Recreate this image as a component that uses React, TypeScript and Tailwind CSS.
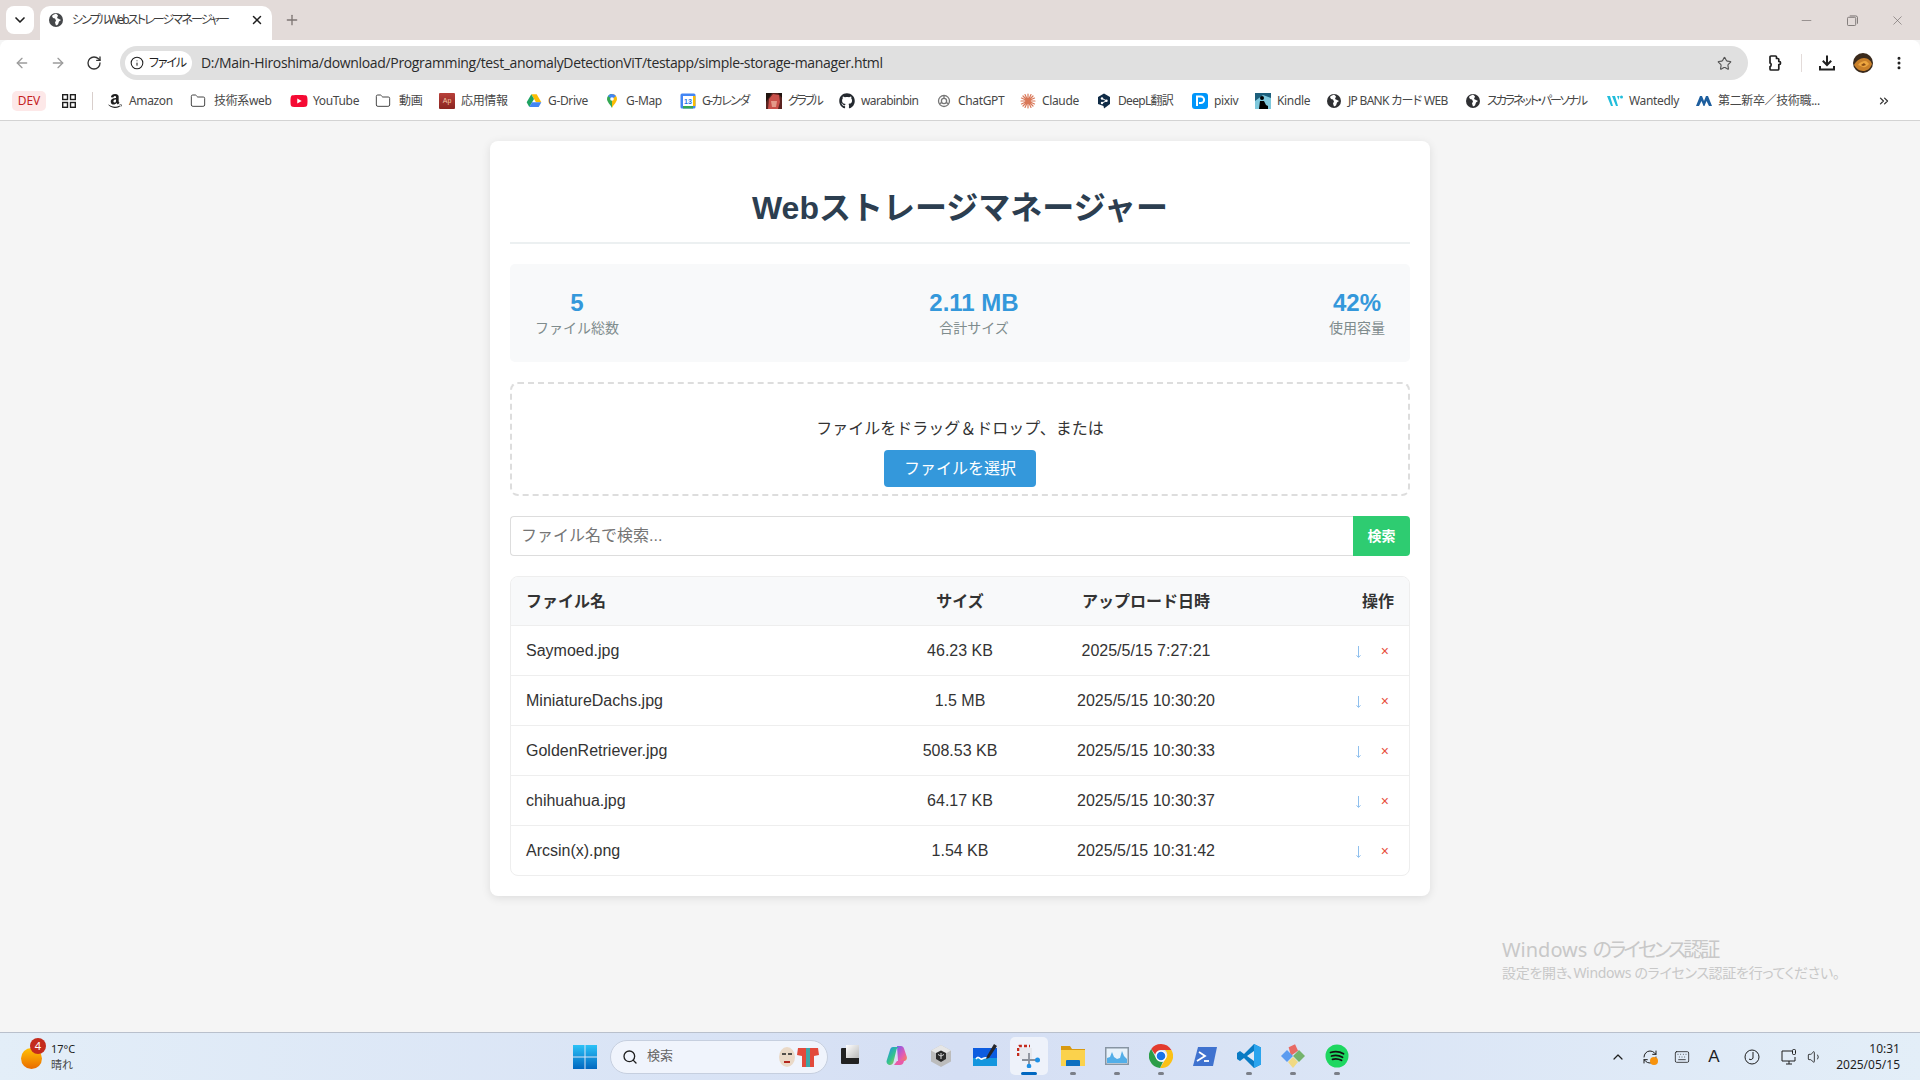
import React from "react";
import { ArrowLeft, ArrowRight, RotateCw, RefreshCw, Info, Star, MoreVertical, ChevronDown, ChevronUp, Plus, X, Minus, Folder, Search, ChevronsRight, Keyboard, Volume1 } from "lucide-react";
import { FaAmazon, FaGithub, FaYoutube } from "react-icons/fa";

const ui = "font-['Noto_Sans','Noto_Sans_CJK_JP',sans-serif] [font-feature-settings:'palt']";

const Drive = () => (
  <svg viewBox="0 0 24 24" className="w-4 h-4">
    <path d="M8 2h8l7 12h-8z" fill="#fbbc04" />
    <path d="M8 2 1 14l4 7 7-12z" fill="#1ea362" />
    <path d="M9 14h14l-4 7H5z" fill="#4285f4" />
  </svg>
);
const MapPin = () => (
  <svg viewBox="0 0 16 16" className="w-4 h-4">
    <path d="M8 1a5 5 0 0 0-5 5c0 3 3 5 5 9z" fill="#34a853" />
    <path d="M8 1a5 5 0 0 1 5 5c0 3-3 5-5 9z" fill="#fbbc04" />
    <path d="M4 3a5 5 0 0 1 8 0L8 6z" fill="#4285f4" />
    <circle cx="8" cy="6" r="1.8" fill="#fff" />
  </svg>
);
const Cal = () => (
  <svg viewBox="0 0 16 16" className="w-4 h-4">
    <rect x="0.5" y="0.5" width="15" height="15" rx="1.5" fill="#4285f4" />
    <rect x="3" y="3" width="10" height="10" fill="#fff" />
    <path d="M3 13h10v2.5H3z" fill="#34a853" />
    <path d="M13 3h2.5v10H13z" fill="#fbbc04" />
    <text x="8" y="11" fontSize="7" textAnchor="middle" fill="#1a73e8" fontFamily="Liberation Sans" fontWeight="700">13</text>
  </svg>
);
const Gbf = () => (
  <svg viewBox="0 0 16 16" className="w-4 h-4">
    <rect width="16" height="16" fill="#5a2320" />
    <path d="M2 16 3 6l4-5 6 1 1 7-2 7z" fill="#c9504a" />
    <path d="M5 8h6l-1 6H6z" fill="#e49a8a" />
    <path d="M0 0h6L2 6 0 9zM16 0h-4l4 5z" fill="#20140f" />
  </svg>
);
const Gpt = () => (
  <svg viewBox="0 0 16 16" className="w-4 h-4" fill="none" stroke="#777" strokeWidth="1.3">
    <circle cx="8" cy="8" r="5.5" />
    <circle cx="8" cy="8" r="2.6" />
    <path d="M8 2.5v3M3.4 11l2.4-1.6M12.6 11l-2.4-1.6" />
  </svg>
);
const Claude = () => (
  <svg viewBox="0 0 16 16" className="w-4 h-4" stroke="#d97757" strokeWidth="1.2" strokeLinecap="round">
    <path d="M8 1v14M1 8h14M3 3l10 10M13 3 3 13M5 1.500l6 13M11 1.500l-6 13M1.500 5l13 6M1.500 11l13-6" />
  </svg>
);
const DeepL = () => (
  <svg viewBox="0 0 16 16" className="w-4 h-4">
    <path d="M8 0.500 14 4v7l-6 4.500-0.500-2.500L2 11V4z" fill="#0f2b46" />
    <circle cx="6" cy="5.500" r="1.200" fill="#fff" />
    <circle cx="6" cy="10" r="1.200" fill="#fff" />
    <circle cx="10.500" cy="7.800" r="1.200" fill="#fff" />
    <path d="M6 5.500l4.500 2.300L6 10" stroke="#fff" fill="none" />
  </svg>
);
const Pixiv = () => (
  <svg viewBox="0 0 16 16" className="w-4 h-4">
    <rect width="16" height="16" rx="3" fill="#0096fa" />
    <path d="M5 13V3.500h3.800a3.300 3.300 0 0 1 0 6.600H7" fill="none" stroke="#fff" strokeWidth="2" />
  </svg>
);
const Kindle = () => (
  <svg viewBox="0 0 16 16" className="w-4 h-4">
    <rect width="16" height="16" fill="#7fc8dc" />
    <path d="M0 0h16v5L8 2 0 8z" fill="#1d5f7c" />
    <circle cx="7" cy="5" r="2" fill="#000" />
    <path d="M4 16 5 8h4l2 4 2 1v3z" fill="#000" />
  </svg>
);
const Wantedly = () => (
  <svg viewBox="0 0 16 16" className="w-4 h-4" fill="#21bddb">
    <path d="M0 3h3l3 10H4zM5 3h3l3 10H9z" />
    <path d="M10 3h2.500l-1 4z" />
    <circle cx="14.500" cy="4" r="1.500" />
  </svg>
);
const Mynavi = () => (
  <svg viewBox="0 0 16 16" className="w-4 h-4" fill="#1d5e9e">
    <path d="M0 13 4 3h2l2 5 2-5h2l4 10h-3L10.500 8 8.500 13h-1L5.500 8 3 13z" />
  </svg>
);
const Ap = () => (
  <div className="w-4 h-4 bg-gradient-to-b from-[#b8403a] to-[#8a2420] rounded-[1px] flex items-center justify-center text-[7px] leading-none text-[#f3c9a8] font-['Liberation_Sans']">Ap</div>
);
const Apps = () => (
  <svg viewBox="0 0 14 14" className="w-[14px] h-[14px]" fill="none" stroke="#1f1f1f" strokeWidth="1.400">
    <rect x="0.700" y="0.700" width="4.800" height="4.800" />
    <rect x="8.500" y="0.700" width="4.800" height="4.800" />
    <rect x="0.700" y="8.500" width="4.800" height="4.800" />
    <rect x="8.500" y="8.500" width="4.800" height="4.800" />
  </svg>
);
const GlobeSolid = ({ fill = "#2f3033" }: { fill?: string }) => (
  <svg viewBox="0 0 16 16" className="w-4 h-4">
    <circle cx="8" cy="8" r="7" fill={fill} />
    <path d="M8 1.500c-1 1-3 1-4 2.500l1 2 2 .5 1 2-1 2 1 3 2-1 1-3 2-1.500-2-1-2-1 1-2.500z" fill="#fff" />
  </svg>
);

const bookmarks: [React.ReactNode, string, string][] = [
  [<FaAmazon className="w-4 h-4 text-[#1f1f1f]" />, "Amazon", "w-[44px]"],
  [<Folder className="w-4 h-4 text-[#474747]" strokeWidth={1.5} />, "技術系web", "w-[62px] pl-[2px]"],
  [<FaYoutube className="w-[18px] h-[18px] -mx-px text-[#f50a33]" />, "YouTube", "w-[45px]"],
  [<Folder className="w-4 h-4 text-[#474747]" strokeWidth={1.5} />, "動画", "w-[25px] pl-[2px]"],
  [<Ap />, "応用情報", "w-[48px]"],
  [<Drive />, "G-Drive", "w-[39px]"],
  [<MapPin />, "G-Map", "w-[37px]"],
  [<Cal />, "G-カレンダ", "w-[47px] tracking-[-1.500px]"],
  [<Gbf />, "グラブル", "w-[34px] tracking-[-2.400px]"],
  [<FaGithub className="w-4 h-4 text-[#24292f]" />, "warabinbin", "w-[58px] tracking-[-0.600px]"],
  [<Gpt />, "ChatGPT", "w-[45px]"],
  [<Claude />, "Claude", "w-[37px]"],
  [<DeepL />, "DeepL翻訳", "w-[57px] tracking-[-0.700px]"],
  [<Pixiv />, "pixiv", "w-[24px]"],
  [<Kindle />, "Kindle", "w-[32px]"],
  [<GlobeSolid />, "JP BANK カード WEB", "w-[100px] tracking-[-0.700px]"],
  [<GlobeSolid />, "スカラネット・パーソナル", "w-[103px] tracking-[-2.100px]"],
  [<Wantedly />, "Wantedly", "w-[50px]"],
  [<Mynavi />, "第二新卒／技術職...", "w-[104px]"],
];

const files = [
  ["Saymoed.jpg", "46.23 KB", "2025/5/15 7:27:21"],
  ["MiniatureDachs.jpg", "1.5 MB", "2025/5/15 10:30:20"],
  ["GoldenRetriever.jpg", "508.53 KB", "2025/5/15 10:30:33"],
  ["chihuahua.jpg", "64.17 KB", "2025/5/15 10:30:37"],
  ["Arcsin(x).png", "1.54 KB", "2025/5/15 10:31:42"],
];

const cols = "grid grid-cols-[364px_140px_232px_132px] items-center px-[15px]";

function Chrome() {
  return (
    <div className={ui}>
      {/* tab strip */}
      <div className="h-10 bg-[#e3dbd9] flex items-end pl-[6px] relative">
        <div className="w-7 h-7 mb-[6px] rounded-[8px] bg-white flex items-center justify-center">
          <ChevronDown className="w-4 h-4 text-[#1f1f1f]" strokeWidth={2.500} />
        </div>
        <div className="ml-[6px] w-[232px] h-[34px] bg-white rounded-t-[10px] flex items-center pl-[8px] pr-[10px] pb-[6px]">
          <GlobeSolid fill="#45474a" />
          <span className="ml-2 text-[12px] text-[#3c3c3c] whitespace-nowrap w-[156px] tracking-[-1.850px]">シンプルWebストレージマネージャー</span>
          <X className="ml-auto -mr-[2px] w-[14px] h-[14px] text-[#1f1f1f]" strokeWidth={2.500} />
        </div>
        <Plus className="ml-[12px] mb-[12px] w-4 h-4 text-[#7d7573]" strokeWidth={2} />
        <div className="ml-auto flex items-center h-10 pr-[15px] text-[#6b6665]">
          <Minus className="w-[15px] h-[15px] mr-[33px]" strokeWidth={1} />
          <svg viewBox="0 0 12 12" className="w-[11px] h-[11px] mr-[32px]" fill="none" stroke="currentColor" strokeWidth="0.900">
            <rect x="0.500" y="2.500" width="9" height="9" rx="1.200" />
            <path d="M3 1h6.500A2 2 0 0 1 11.500 3v6.500" />
          </svg>
          <X className="w-[15px] h-[15px]" strokeWidth={1} />
        </div>
      </div>
      {/* toolbar */}
      <div className="h-[41px] bg-white rounded-t-[8px] flex items-start pt-[6px]">
        <div className="w-[120px] h-[34px] flex items-center pl-[14px] gap-5 shrink-0">
          <ArrowLeft className="w-4 h-4 text-[#9c9c9c]" strokeWidth={2} />
          <ArrowRight className="w-4 h-4 text-[#9c9c9c]" strokeWidth={2} />
          <RotateCw className="w-4 h-4 text-[#333]" strokeWidth={2} />
        </div>
        <div className="w-[1628px] h-[34px] bg-[#e0e0e0] rounded-full flex items-center pl-[5px] pr-[16px] shrink-0">
          <div className="h-6 w-[67px] bg-white rounded-full flex items-center pl-[5px] gap-[5px]">
            <Info className="w-[14px] h-[14px] text-[#1f1f1f]" strokeWidth={1.800} />
            <span className="text-[12px] text-[#1f1f1f] whitespace-nowrap tracking-[-1.200px] -mt-px">ファイル</span>
          </div>
          <span className="ml-[9px] -mt-px w-[682px] text-[14px] text-[#2b2b2b] whitespace-nowrap font-['Open_Sans',sans-serif] tracking-[-0.340px]">D:/Main-Hiroshima/download/Programming/test_anomalyDetectionViT/testapp/simple-storage-manager.html</span>
          <Star className="ml-auto w-[15px] h-[15px] text-[#555]" strokeWidth={1.800} />
        </div>
        <div className="flex-1 h-[34px] flex items-center text-[#1f1f1f]">
          <svg viewBox="0 0 16 16" className="ml-[19px] w-4 h-4" fill="none" stroke="currentColor" strokeWidth="1.700" strokeLinejoin="round">
            <path d="M4 1h4.500a1 1 0 0 1 1 1v1.500h1.300a1 1 0 0 1 1 1V6.500h.7c1.400 0 1.400 3 0 3h-.7V14a1 1 0 0 1-1 1H4a1 1 0 0 1-1-1v-2.500c1.500 0 1.500-3.500 0-3.500V2a1 1 0 0 1 1-1z" />
          </svg>
          <div className="ml-[18px] w-px h-[18px] bg-[#e3dbd9]" />
          <svg viewBox="0 0 16 16" className="ml-[17px] w-4 h-4" fill="none" stroke="currentColor" strokeWidth="2">
            <path d="M8 0.500v9M3.800 5.800 8 10l4.200-4.200M1 11v3.500h14V11" />
          </svg>
          <svg viewBox="0 0 20 20" className="ml-[18px] w-5 h-5">
            <circle cx="10" cy="10" r="10" fill="#3a2a1c" />
            <path d="M1 12c2-4 6-7 10-7s7 3 8 6c-2 5-5 7-9 7s-7-3-9-6z" fill="#c9802a" />
            <path d="M5 12c2-3 5-4 7-4s3 2 4 3c-2 2-4 4-6 3s-3-1-5-2z" fill="#eda63f" />
            <path d="M8 12l3-2 2 2-3 1z" fill="#8a4d14" />
          </svg>
          <MoreVertical className="ml-[18px] w-4 h-4" strokeWidth={2.500} />
        </div>
      </div>
      {/* bookmarks */}
      <div className="h-10 bg-white border-b border-[#d3d3d3] flex items-center pl-3">
        <div className="w-[34px] h-5 rounded-[5px] bg-[#fde8e8] flex items-center justify-center text-[12px] text-[#c5221f] shrink-0">DEV</div>
        <div className="ml-4 shrink-0"><Apps /></div>
        <div className="ml-4 w-px h-[18px] bg-[#d9cfcc] shrink-0" />
        <div className="ml-[14px] flex items-center gap-[17px]">
          {bookmarks.map(([icon, label, w]) => (
            <div key={label} className="flex items-center gap-[6px] shrink-0">
              <div className="w-4 h-4 flex items-center justify-center shrink-0">{icon}</div>
              <span className={`text-[12px] leading-4 text-[#474747] whitespace-nowrap tracking-[-0.350px] ${w}`}>{label}</span>
            </div>
          ))}
        </div>
        <ChevronsRight className="ml-auto mr-[29px] w-[14px] h-[14px] text-[#333]" strokeWidth={2.200} />
      </div>
    </div>
  );
}

function Card() {
  return (
    <div className="w-[940px] mx-auto mt-5 bg-white rounded-lg shadow-[0_2px_10px_rgba(0,0,0,0.1)] p-5 text-[#333] font-['Liberation_Sans','Noto_Sans_CJK_JP',sans-serif]">
      <h1 className="pt-[27px] pb-[14px] text-[32px] leading-10 font-bold text-[#2c3e50] text-center border-b-2 border-[#ecf0f1] mb-5">Webストレージマネージャー</h1>
      <div className="bg-[#f8f9fa] rounded-[5px] flex justify-between px-[25px] py-6 mb-5 text-center">
        {[["5", "ファイル総数"], ["2.11 MB", "合計サイズ"], ["42%", "使用容量"]].map(([v, l]) => (
          <div key={l}>
            <div className="text-[24px] leading-[30px] font-bold text-[#3498db]">{v}</div>
            <div className="text-[14px] leading-5 text-[#7f8c8d]">{l}</div>
          </div>
        ))}
      </div>
      <div className="h-[114px] border-2 border-dashed border-[#ddd] rounded-lg mb-5 flex flex-col items-center pt-[32px]">
        <p className="text-[16px] leading-[26px]">ファイルをドラッグ＆ドロップ、または</p>
        <button className="mt-[8px] w-[152px] h-[37px] bg-[#3498db] text-white rounded text-[16px]">ファイルを選択</button>
      </div>
      <div className="flex h-10 mb-5">
        <input readOnly placeholder="ファイル名で検索..." className="flex-1 border border-[#ddd] border-r-0 rounded-l px-[10px] text-[16px] placeholder:text-[#757575] outline-none" />
        <button className="w-[57px] bg-[#2ecc71] text-white text-[14px] font-bold rounded-r">検索</button>
      </div>
      <div className="border border-[#eee] rounded-lg overflow-hidden">
        <div className={`${cols} h-[49px] pt-[2px] bg-[#f8f9fa] font-bold text-[16px] border-b border-[#eee]`}>
          <div>ファイル名</div>
          <div className="text-center">サイズ</div>
          <div className="text-center">アップロード日時</div>
          <div className="text-right">操作</div>
        </div>
        {files.map(([n, s, d], i) => (
          <div key={n} className={`${cols} ${i < 4 ? "h-[50px] border-b border-[#eee]" : "h-[49px]"} text-[16px]`}>
            <div>{n}</div>
            <div className="text-center">{s}</div>
            <div className="text-center">{d}</div>
            <div className="flex justify-end items-center">
              <svg viewBox="0 0 7 12" className="w-[7px] h-3 mt-[2px] mr-[19px]" fill="none" stroke="#8fc0ee" strokeWidth="1">
                <path d="M3.500 0v11M1.500 9.300 3.500 11.500 5.500 9.300" />
              </svg>
              <span className="text-[14px] leading-none text-[#e74c3c] mr-[5px]">×</span>
            </div>
          </div>
        ))}
      </div>
    </div>
  );
}

const Dot = () => <div className="w-[6px] h-[3px] rounded-full bg-[#7b7f88]" />;

function Tile({ children, dot, active }: { children: React.ReactNode; dot?: boolean; active?: boolean }) {
  return (
    <div className="relative w-[44px] h-[47px] flex items-center justify-center pb-px">
      {active && <div className="absolute left-[3px] top-[4px] w-[38px] h-[38px] rounded-[5px] bg-[#eef2fa]" />}
      <div className="relative">{children}</div>
      {dot && <div className="absolute left-[19px] top-[39px]"><Dot /></div>}
      {active && <div className="absolute left-[14px] top-[39px] w-4 h-[3px] rounded-full bg-[#0067c0]" />}
    </div>
  );
}

function Taskbar() {
  return (
    <div className={`${ui} h-12 border-t border-[#b9c0cc] bg-gradient-to-r from-[#e3eef8] via-[#d5dff4] to-[#e3eef8] flex items-center shrink-0`}>
      <div className="w-[573px] h-full relative flex items-center shrink-0">
        <div className="ml-[21px] w-[21px] h-[21px] mt-[3px] rounded-full bg-gradient-to-b from-[#ffc107] to-[#e86a00]" />
        <div className="absolute left-[30px] top-[5px] w-4 h-4 rounded-full bg-[#c42b1c] text-white text-[11px] leading-4 text-center">4</div>
        <div className="ml-[9px] text-[11px] leading-4 text-[#1f1f1f]">
          <div>17°C</div>
          <div className="text-[#444]">晴れ</div>
        </div>
      </div>
      <svg viewBox="0 0 24 24" className="w-6 h-6 shrink-0">
        <defs>
          <linearGradient id="w" x1="0" y1="0" x2="0" y2="1">
            <stop offset="0" stopColor="#2cc2f7" />
            <stop offset="1" stopColor="#0067c0" />
          </linearGradient>
          <linearGradient id="cp1" x1="0" y1="0" x2="1" y2="1">
            <stop offset="0" stopColor="#1c8cf0" />
            <stop offset="0.500" stopColor="#35c48a" />
            <stop offset="1" stopColor="#f6c33b" />
          </linearGradient>
          <linearGradient id="cp2" x1="0" y1="0" x2="1" y2="1">
            <stop offset="0" stopColor="#7a5cf0" />
            <stop offset="0.600" stopColor="#e55bb0" />
            <stop offset="1" stopColor="#f78a4c" />
          </linearGradient>
        </defs>
        <path d="M0 0h11.500v11.500H0zM12.500 0H24v11.500H12.500zM0 12.500h11.500V24H0zM12.500 12.500H24V24H12.500z" fill="url(#w)" />
      </svg>
      <div className="ml-[13px] w-[218px] h-[34px] rounded-full bg-[#f0f4fc] border border-[#c6cfdf] flex items-center pl-[11px] shrink-0">
        <Search className="w-4 h-4 text-[#1f1f1f]" strokeWidth={2} />
        <span className="ml-[9px] text-[13px] text-[#666] -mt-px">検索</span>
        <svg viewBox="0 0 42 24" className="ml-auto mr-[7px] w-[42px] h-6">
          <ellipse cx="9" cy="12" rx="8" ry="10" fill="#ead9c7" />
          <path d="M4 9h4M10 9h4" stroke="#222" strokeWidth="1.500" />
          <path d="M6 16h6v2H6z" fill="#b3261e" />
          <path d="M20 3h20l1 7-5 1v11h-12V11l-5-1z" fill="#e24a3b" />
          <path d="M28 3h4v19h-4z" fill="#3fa6a6" />
        </svg>
      </div>
      <div className="mr-[3px]">
        <Tile>
          <div className="w-[18px] h-4 bg-[#222] rounded-[1px] relative">
            <div className="absolute -top-[3px] right-0 w-[13px] h-[13px] bg-gradient-to-br from-white to-[#bbb]" />
          </div>
        </Tile>
      </div>
      <Tile>
        <svg viewBox="0 0 24 24" className="w-6 h-6">
          <path d="M12 2h4c1.500 0 2.500 1 3 2.500l2.700 8c.8 2.500-.7 4.500-3 4.500H13z" fill="url(#cp2)" />
          <path d="M8 3h7c-2 0-3 1-3.500 2.500L8.500 18c-.5 2-2 3-3.500 3-2.500 0-4-2.500-3.300-4.500L5 6c.5-2 1.500-3 3-3z" fill="url(#cp1)" />
          <path d="M9 21h6c2 0 3-1 3.500-2.500L20 14c-1 2-2.500 3-4 3h-4z" fill="#e85aa8" />
        </svg>
      </Tile>
      <Tile>
        <svg viewBox="0 0 24 24" className="w-6 h-6">
          <path d="M12 1 22 6.500v11L12 23 2 17.500v-11z" fill="#bcbcbc" />
          <path d="M12 1 22 6.500 12 12 2 6.500z" fill="#e6e6e6" />
          <path d="M12 6.500 17 9v6l-5 3-5-3V9z" fill="#2a2a2a" />
          <path d="M12 9v6M9 10.500l3 1.500 3-1.500" stroke="#ddd" />
        </svg>
      </Tile>
      <Tile>
        <svg viewBox="0 0 24 24" className="w-6 h-6">
          <rect x="0" y="4" width="24" height="18" fill="#0d5ce0" />
          <path d="M0 14h24v8H0z" fill="#1496de" />
          <path d="M3 15c3-4 4 1 6 0s3-2 5-1" stroke="#fff" strokeWidth="1.600" fill="none" />
          <path d="m14 12 7-12 3 2-8 12-3 1z" fill="#26262c" />
        </svg>
      </Tile>
      <Tile active>
        <svg viewBox="0 0 24 24" className="w-6 h-6" fill="none">
          <path d="M1 7V3.500A1.500 1.500 0 0 1 2.500 2H5" stroke="#c42b1c" strokeWidth="2.600" strokeDasharray="3 2" />
          <path d="M1 9v5" stroke="#c42b1c" strokeWidth="2.600" strokeDasharray="3 2" />
          <path d="M7 2h6" stroke="#c42b1c" strokeWidth="2.600" strokeDasharray="3 2" />
          <rect x="3" y="4" width="12" height="11" fill="#e7e9ee" />
          <path d="M12 9v14M5 16h17" stroke="#8a9099" strokeWidth="1.800" />
          <circle cx="20.500" cy="16" r="2.500" fill="#1e90e6" />
          <circle cx="12" cy="22" r="2.300" fill="#1e90e6" />
        </svg>
      </Tile>
      <Tile dot>
        <svg viewBox="0 0 24 24" className="w-6 h-6">
          <path d="M0 2h9l2 3h13v4H0z" fill="#d99a10" />
          <path d="M0 6h24v16H0z" fill="#fbd24c" />
          <path d="M6 16h12a1 1 0 0 1 1 1v5H5v-5a1 1 0 0 1 1-1z" fill="#0d6fc0" />
        </svg>
      </Tile>
      <Tile dot>
        <svg viewBox="0 0 24 24" className="w-6 h-6">
          <rect x="0" y="3" width="24" height="18" fill="#8795a3" />
          <rect x="1.500" y="4.500" width="21" height="15" fill="#e7f2fb" />
          <path d="M2 19V14l3-1 2-5 2 5 3 2 3-1 2-7 2 5 3 3v4z" fill="#52aee8" />
        </svg>
      </Tile>
      <Tile dot>
        <svg viewBox="0 0 24 24" className="w-6 h-6">
          <path d="M12 0a12 12 0 0 1 10.400 6H12a6 6 0 0 0-5.800 4.500L2.200 5A12 12 0 0 1 12 0z" fill="#e33b2e" />
          <path d="M22.400 6A12 12 0 0 1 11 24l5.500-9a6 6 0 0 0-.5-9z" fill="#fbc116" />
          <path d="M2.200 5 7.500 15a6 6 0 0 0 6.500 2.700L11 24A12 12 0 0 1 2.200 5z" fill="#2b9d48" />
          <circle cx="12" cy="12" r="5.500" fill="#fff" />
          <circle cx="12" cy="12" r="4.300" fill="#1a73e8" />
        </svg>
      </Tile>
      <Tile>
        <svg viewBox="0 0 24 24" className="w-6 h-6">
          <path d="M5 3h19l-4 19H0z" fill="#3f72cf" />
          <path d="m6 8 6 4-8 5" stroke="#fff" strokeWidth="1.800" fill="none" />
          <path d="M11 17h5" stroke="#fff" strokeWidth="1.800" />
        </svg>
      </Tile>
      <Tile dot>
        <svg viewBox="0 0 24 24" className="w-6 h-6">
          <path d="M17 0 24 3.500v17L17 24 7 14l-4 3-3-2v-6l3-2 4 3z" fill="#0a7bc4" />
          <path d="M17 0 24 3.500v17L17 24z" fill="#2aa4ee" />
          <path d="M17 7 10 12l7 5z" fill="#e3eaf7" />
        </svg>
      </Tile>
      <Tile dot>
        <svg viewBox="0 0 24 24" className="w-6 h-6">
          <path d="M12 0 17 5l-5 7-5-7z" fill="#e86a64" transform="rotate(20 12 6)" />
          <path d="m6 6 6 6-6 6-6-6z" fill="#5b9bf0" />
          <path d="m18 6 6 6-6 6-6-6z" fill="#74b36c" />
          <path d="m12 13 5 5-5 6-5-6z" fill="#f0d982" />
        </svg>
      </Tile>
      <Tile dot>
        <svg viewBox="0 0 24 24" className="w-6 h-6">
          <circle cx="12" cy="12" r="11.500" fill="#1ed760" />
          <path d="M5.500 8.500c4-1.200 9-1 13 1.200M6.500 12c3.500-1 7.500-.7 11 1.200M7.500 15.300c3-.8 6-.5 9 1" stroke="#111" strokeWidth="1.800" fill="none" strokeLinecap="round" />
        </svg>
      </Tile>
      <div className="flex-1 flex items-center justify-end text-[#1f1f1f] pr-[20px]">
        <ChevronUp className="w-4 h-4" strokeWidth={1.800} />
        <div className="relative ml-[16px]">
          <RefreshCw className="w-4 h-4" strokeWidth={1.500} />
          <div className="absolute left-[8px] top-[8px] w-2 h-2 rounded-full bg-[#f7930e]" />
        </div>
        <Keyboard className="ml-[16px] w-4 h-4" strokeWidth={1.200} />
        <span className="ml-[18px] text-[17px] leading-none font-['Liberation_Sans'] w-[12px] text-center">A</span>
        <svg viewBox="0 0 16 16" className="ml-[24px] w-4 h-4" fill="none" stroke="currentColor"><circle cx="8" cy="8" r="7" /><path d="M9 3v6a2.500 2.500 0 0 1-4 1" /></svg>
        <svg viewBox="0 0 16 16" className="ml-[21px] w-4 h-4" fill="none" stroke="currentColor"><path d="M11 2H1v10h13V8M5 15h6M8 12v3" /><rect x="11.500" y="0.500" width="3" height="5" rx="1" /></svg>
        <Volume1 className="ml-[10px] w-4 h-4" strokeWidth={1.300} />
        <div className="ml-[13px] w-[64px] text-right text-[12px] leading-4 text-[#1f1f1f]">
          <div>10:31</div>
          <div className="whitespace-nowrap">2025/05/15</div>
        </div>
      </div>
    </div>
  );
}

export default function App() {
  return (
    <div className="h-screen flex flex-col bg-[#f5f5f5] overflow-hidden relative">
      <Chrome />
      <main className="flex-1 min-h-0">
        <Card />
      </main>
      <Taskbar />
      <div className={`${ui} absolute left-[1502px] top-[936px] text-[#c8c8c8] pointer-events-none`}>
        <div className="text-[20px] leading-7 whitespace-nowrap">Windows <span className="tracking-[-3px]">のライセンス認証</span></div>
        <div className="text-[14px] leading-5 whitespace-nowrap -mt-px tracking-[-0.300px]">設定を開き、Windows のライセンス認証を行ってください。</div>
      </div>
    </div>
  );
}
